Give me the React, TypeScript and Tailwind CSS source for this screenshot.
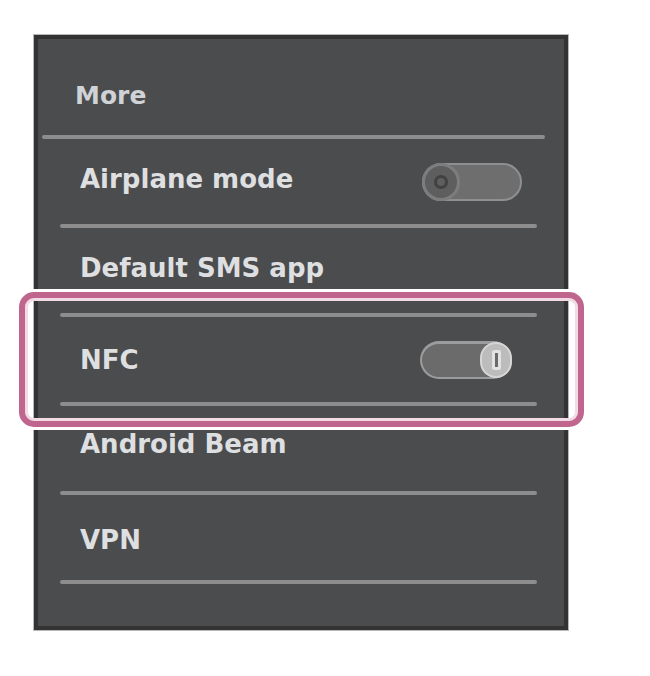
import React from 'react';

const font = { fontFamily: '"DejaVu Sans", "Liberation Sans", sans-serif' };

const Divider = ({ full }: { full?: boolean }) => (
  <div
    className={
      full
        ? 'ml-[4px] h-[4px] w-[503px] rounded-full bg-[#8d8d8d]'
        : 'ml-[22px] h-[4px] w-[477px] rounded-full bg-[#8d8d8d]'
    }
  />
);

const ToggleOff = () => (
  <div className="relative flex h-[38px] w-[100px] items-center rounded-full border-2 border-[#8f8f8f] bg-[#6e6e6e]">
    <div className="absolute -left-[2px] flex h-[38px] w-[38px] items-center justify-center rounded-full border-[3px] border-[#7d7d7d] bg-[#5e5e5e]">
      <div className="h-[14px] w-[14px] rounded-full border-[3px] border-[#414141]" />
    </div>
  </div>
);

const ToggleOn = () => (
  <div className="relative flex h-[38px] w-[92px] items-center rounded-full border-2 border-t-[3px] border-[#9c9c9c] bg-[#6b6b6b]">
    <div className="absolute -right-[2px] flex h-[36px] w-[32px] items-center justify-center rounded-full border-2 border-[#d6d6d6] bg-[#bcbcbc]">
      <div className="h-[20px] w-[9px] rounded-[2px] bg-[#e2e2e2] p-[3px]">
        <div className="h-full w-full bg-[#6a6a6a]" />
      </div>
    </div>
  </div>
);

const Row = ({ label, right, pr, shift }: { label: string; right?: React.ReactNode; pr?: string; shift?: string }) => (
  <div className={`flex h-[85px] items-center justify-between pl-[42px] ${pr ?? ''}`}>
    <span className={`text-[26px] font-bold leading-[30px] text-[#dedfe0] ${shift ?? ''}`} style={font}>
      {label}
    </span>
    {right}
  </div>
);

export default function App() {
  return (
    <div className="min-h-[676px] w-[650px] bg-white pl-[34px] pt-[35px]">
      <div className="h-[595px] w-[534px] border-4 border-[#333333] bg-[#4b4c4d] shadow-[0_0_0_1px_#b8b8b8]">
        <div className="h-[96px] pl-[37px] pt-[42px]">
          <span className="text-[25px] font-bold leading-[30px] text-[#cfd2d6]" style={font}>
            More
          </span>
        </div>
        <Divider full />
        <Row label="Airplane mode" right={<ToggleOff />} pr="pr-[42px]" shift="-mt-[6px]" />
        <Divider />
        <Row label="Default SMS app" shift="-mt-[5px]" />
        <div className="relative">
          <Divider />
          <Row label="NFC" right={<ToggleOn />} pr="pr-[52px]" />
          <Divider />
          <div className="pointer-events-none absolute -bottom-[21px] -left-[19px] -right-[20px] -top-[21px] rounded-[15px] border-[6px] border-[#c0668e] shadow-[0_0_0_3px_#ffffff,inset_0_0_0_3px_#f2dbe5]" />
        </div>
        <Row label="Android Beam" shift="-mt-[9px]" />
        <Divider />
        <Row label="VPN" shift="mt-[5px]" />
        <Divider />
      </div>
    </div>
  );
}
